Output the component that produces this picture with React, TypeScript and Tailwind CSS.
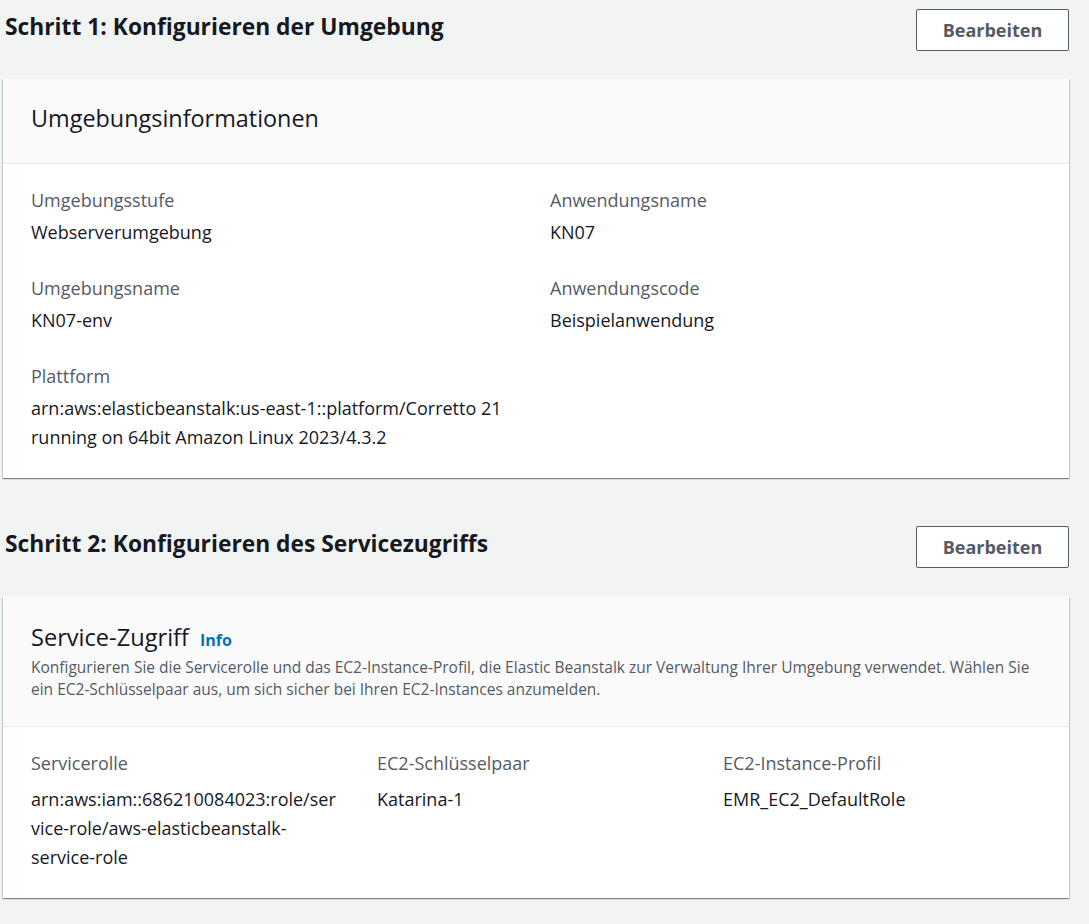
import React from 'react'

const font = { fontFamily: '"Open Sans", "Noto Sans", Arial, sans-serif' }

function EditButton() {
  return (
    <button className="h-[42px] w-[153px] rounded-[2px] border border-[#545b64] bg-white text-[18px] font-bold text-[#545b64]">
      Bearbeiten
    </button>
  )
}

function Field({ label, children, gap = 'mt-[6px]' }: { label: string; children: React.ReactNode; gap?: string }) {
  return (
    <div className="min-w-0">
      <div className="text-[18px] leading-[24px] text-[#545b64]">{label}</div>
      <div className={`${gap} text-[18px] leading-[29px] text-[#16191f] [overflow-wrap:anywhere]`}>{children}</div>
    </div>
  )
}

function Card({ children }: { children: React.ReactNode }) {
  return (
    <div className="bg-white shadow-[0_1px_1px_0_rgba(0,28,36,0.3),1px_1px_1px_0_rgba(0,28,36,0.15),-1px_1px_1px_0_rgba(0,28,36,0.15)]">
      {children}
    </div>
  )
}

export default function App() {
  return (
    <div style={font} className="min-h-screen bg-[#f2f3f3] pl-[3px] pr-[20px] pt-[9px]">
      {/* Schritt 1 */}
      <div className="flex items-center justify-between">
        <h2 className="pl-[2px] -mt-[5px] text-[22.8px] font-bold text-[#16191f]">Schritt 1: Konfigurieren der Umgebung</h2>
        <EditButton />
      </div>

      <div className="mt-[28px]">
        <Card>
          <div className="border-b border-[#eaeded] bg-[#fafafa] px-[28px] pt-[24px] pb-[30px]">
            <h3 className="text-[23.4px] leading-[30px] text-[#16191f]">Umgebungsinformationen</h3>
          </div>
          <div className="grid grid-cols-2 gap-x-[28px] gap-y-[29px] px-[28px] pt-[24px] pb-[26px]">
            <Field label="Umgebungsstufe">Webserverumgebung</Field>
            <Field label="Anwendungsname">KN07</Field>
            <Field label="Umgebungsname">KN07-env</Field>
            <Field label="Anwendungscode">Beispielanwendung</Field>
            <Field label="Plattform">
              arn:aws:elasticbeanstalk:us-east-1::platform/Corretto 21 running on 64bit Amazon Linux 2023/4.3.2
            </Field>
          </div>
        </Card>
      </div>

      {/* Schritt 2 */}
      <div className="mt-[48px] flex items-center justify-between">
        <h2 className="pl-[2px] -mt-[5px] text-[22.8px] font-bold text-[#16191f]">Schritt 2: Konfigurieren des Servicezugriffs</h2>
        <EditButton />
      </div>

      <div className="mt-[29px] pb-[25px]">
        <Card>
          <div className="border-b border-[#eaeded] bg-[#fafafa] px-[28px] pt-[25px] pb-[26px]">
            <div className="flex items-baseline gap-[11px]">
              <h3 className="text-[23.6px] leading-[30px] text-[#16191f]">Service-Zugriff</h3>
              <a href="#" className="text-[16px] font-bold text-[#0073bb]">Info</a>
            </div>
            <p className="mt-[4px] text-[15.5px] leading-[22px] text-[#545b64]">
              Konfigurieren Sie die Servicerolle und das EC2-Instance-Profil, die Elastic Beanstalk zur Verwaltung Ihrer
              Umgebung verwendet. Wählen Sie ein EC2-Schlüsselpaar aus, um sich sicher bei Ihren EC2-Instances anzumelden.
            </p>
          </div>
          <div className="grid grid-cols-3 gap-x-[28px] px-[28px] pt-[24px] pb-[26px]">
            <Field label="Servicerolle" gap="mt-[10px]">
              arn:aws:iam::686210084023:role/ser
              <br />
              vice-role/aws-elasticbeanstalk-
              <br />
              service-role
            </Field>
            <Field label="EC2-Schlüsselpaar" gap="mt-[10px]">Katarina-1</Field>
            <Field label="EC2-Instance-Profil" gap="mt-[10px]">EMR_EC2_DefaultRole</Field>
          </div>
        </Card>
      </div>
    </div>
  )
}
